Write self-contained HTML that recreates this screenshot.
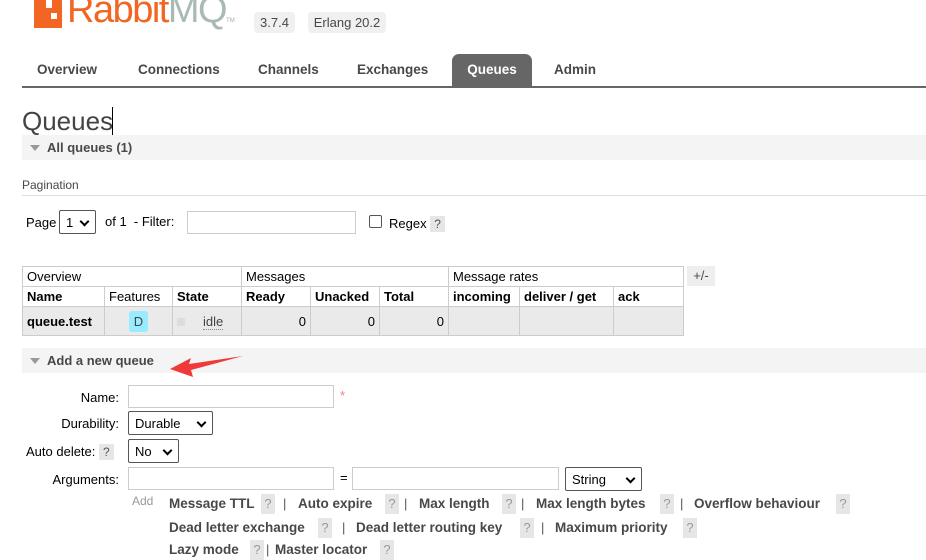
<!DOCTYPE html>
<html><head><meta charset="utf-8"><style>
*{margin:0;padding:0;box-sizing:border-box}
body{width:926px;height:548px;overflow:hidden;background:#fff;font-family:"Liberation Sans",sans-serif;color:#484848;font-size:13px;position:relative}
.a{position:absolute;white-space:nowrap}
.b{font-weight:bold}
.bar{position:absolute;left:22px;right:0;background:#f4f4f4}
.tri{position:absolute;left:8px;width:0;height:0;border-left:5px solid transparent;border-right:5px solid transparent;border-top:6px solid #999}
.q{display:inline-block;background:#e6e6e6;color:#999;padding:1px 4px;font-size:12px}
.qq{position:absolute;width:14px;height:20px;background:#e6e6e6;color:#999;font-size:13px;text-align:center;line-height:20px}
.inp{position:absolute;border:1px solid #ccc;background:#fff;height:23px}
.sel{position:absolute;border:1px solid #555;background:#fff;height:24px;border-radius:2px;font-size:13px;color:#000;padding:4px 6px}
.sel:after{content:"";position:absolute;right:7px;top:7px;width:5px;height:5px;border-right:2px solid #000;border-bottom:2px solid #000;transform:rotate(45deg)}
table{position:absolute;left:22px;top:266px;border-collapse:collapse;font-size:13px}
td{border:1px solid #ccc;padding:0 4px;height:20px;color:#000}
tr.d td{background:#eaeaea;height:29px;vertical-align:middle}
.ar{position:absolute;font-weight:bold;font-size:13.5px;white-space:nowrap}
.pp{position:absolute;color:#555}
</style></head><body>
<div class="a" style="left:34px;top:0;width:28px;height:28px;background:#f26522"></div>
<div class="a" style="left:46px;top:0;width:6px;height:8px;background:#fff"></div>
<div class="a" style="left:51px;top:13px;width:6px;height:6px;background:#fff"></div>
<div class="a" style="left:67px;top:-11px;font-size:38px;color:#f26522;letter-spacing:-1.5px">Rabbit<span style="color:#a9bab4">MQ</span><span style="font-size:6px;color:#aaa;letter-spacing:0">TM</span></div>
<div class="a" style="left:254px;top:12px;width:41px;height:21px;background:#f0f0f0;border-radius:4px;text-align:center;line-height:21px;font-size:13px">3.7.4</div>
<div class="a" style="left:308px;top:12px;width:78px;height:21px;background:#f0f0f0;border-radius:4px;text-align:center;line-height:21px;font-size:13px">Erlang 20.2</div>
<div class="a b" style="left:37px;top:62px;font-size:13.5px">Overview</div>
<div class="a b" style="left:138px;top:62px;font-size:13.5px">Connections</div>
<div class="a b" style="left:258px;top:62px;font-size:13.5px">Channels</div>
<div class="a b" style="left:357px;top:62px;font-size:13.5px">Exchanges</div>
<div class="a b" style="left:452px;top:54px;width:80px;height:32px;background:#666;color:#fff;border-radius:7px 7px 0 0;text-align:center;line-height:32px;font-size:13.5px">Queues</div>
<div class="a b" style="left:554px;top:62px;font-size:13.5px">Admin</div>
<div class="a" style="left:22px;right:0;top:86px;height:2px;background:#666"></div>
<div class="a" style="left:22px;top:106px;font-size:26px;color:#444">Queues</div>
<div class="a" style="left:112px;top:107px;width:1px;height:28px;background:#000"></div>
<div class="bar" style="top:135px;height:25px"><div class="tri" style="top:10px"></div><div class="a b" style="left:25px;top:5px">All queues (1)</div></div>
<div class="a" style="left:22px;top:178px;font-size:12px">Pagination</div>
<div class="a" style="left:22px;right:0;top:195px;height:1px;background:#ddd"></div>
<div class="a" style="left:26px;top:215px;color:#000">Page</div>
<div class="sel" style="left:59px;top:210px;width:37px;height:24px">1</div>
<div class="a" style="left:105px;top:214px;color:#000">of 1 &nbsp;- Filter:</div>
<div class="inp" style="left:187px;top:211px;width:169px"></div>
<div class="a" style="left:369px;top:215px;width:13px;height:13px;border:1px solid #555;border-radius:2px"></div>
<div class="a" style="left:389px;top:216px;color:#000">Regex <span class="q" style="color:#555">?</span></div>
<table>
<tr><td colspan="3" style="width:219px">Overview</td><td colspan="3">Messages</td><td colspan="3">Message rates</td></tr>
<tr class="b"><td style="width:82px">Name</td><td style="width:68px;font-weight:normal">Features</td><td style="width:69px">State</td><td style="width:69px">Ready</td><td style="width:69px">Unacked</td><td style="width:69px">Total</td><td style="width:71px">incoming</td><td style="width:94px">deliver / get</td><td style="width:70px">ack</td></tr>
<tr class="d"><td class="b">queue.test</td><td style="text-align:center"><span style="display:inline-block;background:#99ebff;border-radius:3px;padding:3px 5px;color:#444">D</span></td><td><span style="display:inline-block;width:8px;height:8px;background:#ddd;margin-right:18px"></span><span style="border-bottom:1px dotted #888;color:#444">idle</span></td><td style="text-align:right">0</td><td style="text-align:right">0</td><td style="text-align:right">0</td><td></td><td></td><td></td></tr>
</table>
<div class="a" style="left:687px;top:266px;width:28px;height:20px;background:#eee;text-align:center;line-height:20px">+/-</div>
<div class="bar" style="top:348px;height:25px"><div class="tri" style="top:10px"></div><div class="a b" style="left:25px;top:5px">Add a new queue</div></div>
<svg class="a" style="left:165px;top:352px" width="80" height="26"><path d="M78 4 L24 12 L26 6 L5 17 L28 25 L26 18 Z" fill="#f03a3a"/></svg>
<div class="a" style="right:807px;top:390px;color:#000">Name:</div>
<div class="inp" style="left:128px;top:385px;width:206px"></div>
<div class="a" style="left:340px;top:388px;color:#f08080">*</div>
<div class="a" style="right:807px;top:416px;color:#000">Durability:</div>
<div class="sel" style="left:128px;top:411px;width:85px">Durable</div>
<div class="a" style="left:26px;top:444px;color:#000">Auto delete: <span class="q" style="color:#555">?</span></div>
<div class="sel" style="left:128px;top:439px;width:51px">No</div>
<div class="a" style="right:807px;top:472px;color:#000">Arguments:</div>
<div class="inp" style="left:128px;top:467px;width:206px"></div>
<div class="a" style="left:340px;top:470px;color:#000">=</div>
<div class="inp" style="left:352px;top:467px;width:207px"></div>
<div class="sel" style="left:565px;top:467px;width:77px">String</div>
<div class="a" style="left:132px;top:494px;color:#999;font-size:12px">Add</div>
<div class="ar" style="left:169px;top:496px">Message TTL</div><div class="qq" style="left:261px;top:494px">?</div><div class="pp" style="left:283px;top:496px">|</div>
<div class="ar" style="left:298px;top:496px">Auto expire</div><div class="qq" style="left:385px;top:494px">?</div><div class="pp" style="left:404px;top:496px">|</div>
<div class="ar" style="left:419px;top:496px">Max length</div><div class="qq" style="left:502px;top:494px">?</div><div class="pp" style="left:521px;top:496px">|</div>
<div class="ar" style="left:536px;top:496px">Max length bytes</div><div class="qq" style="left:660px;top:494px">?</div><div class="pp" style="left:680px;top:496px">|</div>
<div class="ar" style="left:694px;top:496px">Overflow behaviour</div><div class="qq" style="left:836px;top:494px">?</div>
<div class="ar" style="left:169px;top:520px">Dead letter exchange</div><div class="qq" style="left:318px;top:518px">?</div><div class="pp" style="left:342px;top:520px">|</div>
<div class="ar" style="left:356px;top:520px">Dead letter routing key</div><div class="qq" style="left:520px;top:518px">?</div><div class="pp" style="left:541px;top:520px">|</div>
<div class="ar" style="left:555px;top:520px">Maximum priority</div><div class="qq" style="left:683px;top:518px">?</div>
<div class="ar" style="left:169px;top:542px">Lazy mode</div><div class="qq" style="left:250px;top:540px">?</div><div class="pp" style="left:266px;top:542px">|</div>
<div class="ar" style="left:275px;top:542px">Master locator</div><div class="qq" style="left:380px;top:540px">?</div>
</body></html>
